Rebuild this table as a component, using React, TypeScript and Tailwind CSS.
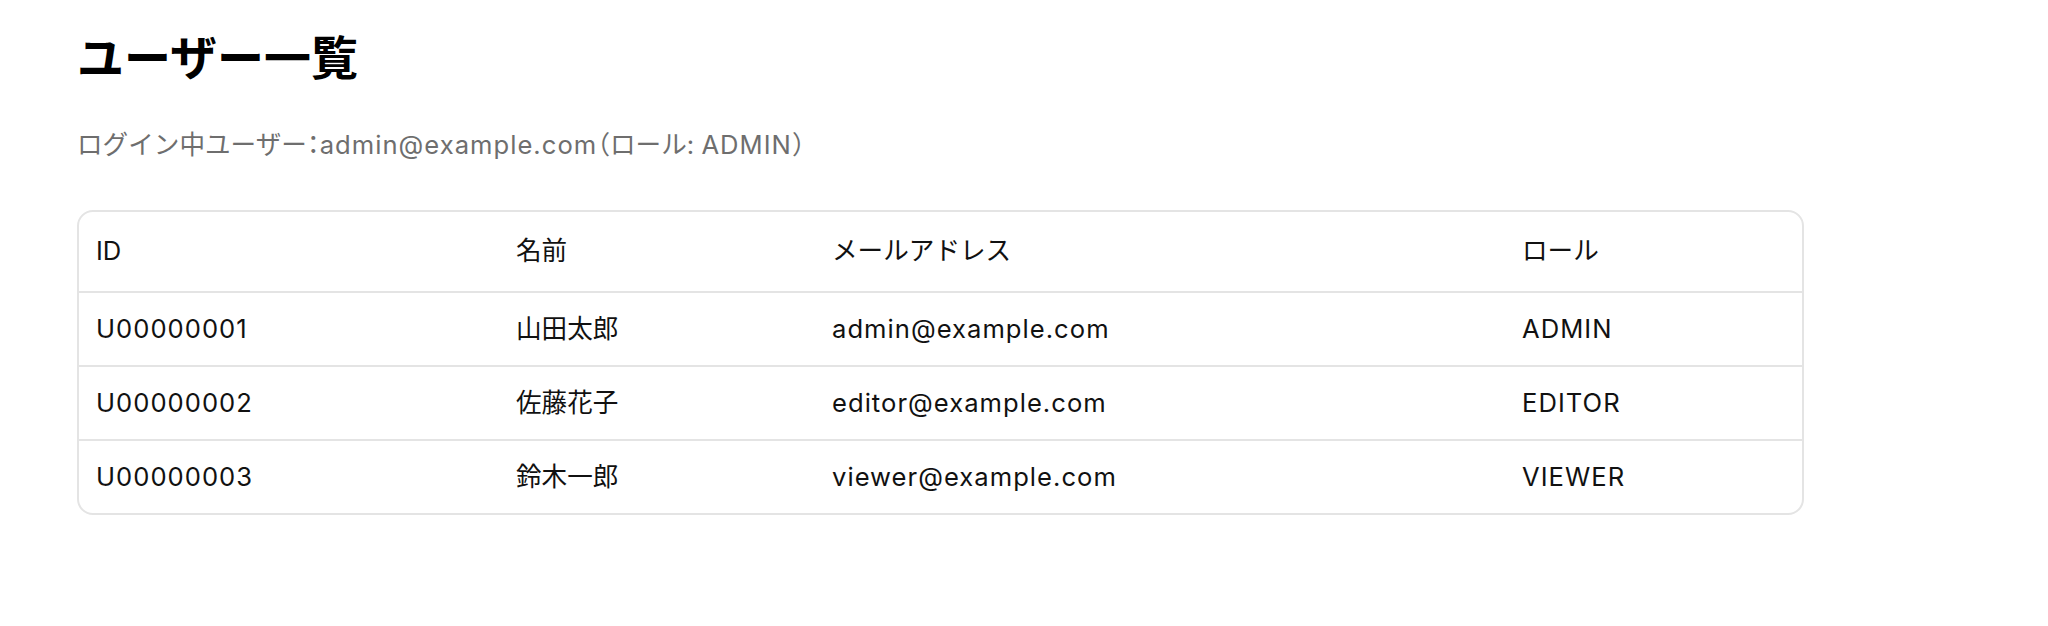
import React from 'react';

type User = {
  id: string;
  name: string;
  email: string;
  role: string;
};

const users: User[] = [
  { id: 'U00000001', name: '山田太郎', email: 'admin@example.com', role: 'ADMIN' },
  { id: 'U00000002', name: '佐藤花子', email: 'editor@example.com', role: 'EDITOR' },
  { id: 'U00000003', name: '鈴木一郎', email: 'viewer@example.com', role: 'VIEWER' },
];

// latin cells get a touch of tracking, kana/kanji cells don't
const Row = ({ cells, header }: { cells: string[]; header?: boolean }) => (
  <div
    className={
      header
        ? 'grid grid-cols-[420px_316px_690px_296px] h-[79px] items-center'
        : 'grid grid-cols-[420px_316px_690px_296px] h-[74px] items-center border-t-2 border-[#e4e4e4]'
    }
  >
    {cells.map((c, i) => (
      <div
        key={i}
        className={
          !header && i !== 1
            ? 'px-[17px] whitespace-nowrap tracking-[0.04em]'
            : 'px-[17px] whitespace-nowrap'
        }
      >
        {c}
      </div>
    ))}
  </div>
);

const App = () => {
  return (
    <div
      className="min-h-screen bg-white text-[#111] pl-[77px] pt-[30px]"
      style={{ fontFamily: 'Inter, "Noto Sans CJK JP", sans-serif' }}
    >
      <h1 className="text-[47px] leading-[56px] font-bold text-black">ユーザー一覧</h1>

      <p className="mt-[41px] text-[25.6px] leading-[36px] text-[#6e6e6e]">
        ログイン中ユーザー<span className="[font-feature-settings:'halt']">：</span>
        <span className="tracking-[0.04em]">admin@example.com</span>
        <span className="[font-feature-settings:'halt']">（</span>ロール:{' '}
        <span className="tracking-[0.04em]">ADMIN</span>
        <span className="[font-feature-settings:'halt']">）</span>
      </p>

      <div className="mt-[47px] w-[1727px] border-2 border-[#e4e4e4] rounded-[16px] overflow-hidden text-[25.6px]">
        <Row header cells={['ID', '名前', 'メールアドレス', 'ロール']} />
        {users.map((u) => (
          <Row key={u.id} cells={[u.id, u.name, u.email, u.role]} />
        ))}
      </div>
    </div>
  );
};

export default App;
